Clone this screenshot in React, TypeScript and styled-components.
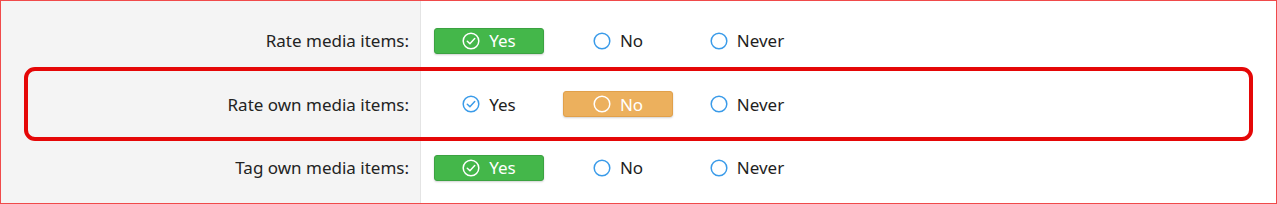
import React from "react";
import styled, { createGlobalStyle } from "styled-components";

const Global = createGlobalStyle`
  html, body { margin: 0; padding: 0; background: #fff; }
  body { font-family: "Noto Sans", "Open Sans", sans-serif; }
`;

const Frame = styled.div`
  position: relative;
  width: 1277px;
  height: 204px;
  box-sizing: border-box;
  border: 1px solid #f04a4a;
  display: grid;
  grid-template-columns: 420px 1fr;
  overflow: hidden;
`;

const LabelCol = styled.div`
  box-sizing: border-box;
  background: #f4f4f4;
  border-right: 1px solid #e4e4e4;
  padding: 8px 11px 0 0;
  display: flex;
  flex-direction: column;
`;

const OptionCol = styled.div`
  padding: 8px 0 0 13px;
  display: flex;
  flex-direction: column;
`;

const Label = styled.div`
  height: 63.5px;
  display: flex;
  align-items: center;
  justify-content: flex-end;
  font-size: 17px;
  color: #232323;
`;

const Row = styled.div`
  height: 63.5px;
  display: flex;
  align-items: center;
  gap: 19px;
`;

type Tone = "green" | "orange" | "none";

const toneBg: Record<Tone, string> = {
  green: "#44b74a",
  orange: "#ecb05d",
  none: "transparent",
};
const toneBorder: Record<Tone, string> = {
  green: "#3ba241",
  orange: "#e1a04a",
  none: "transparent",
};

const Choice = styled.div<{ $tone: Tone }>`
  width: 110px;
  height: 26px;
  box-sizing: border-box;
  border-radius: 3px;
  display: flex;
  align-items: center;
  justify-content: center;
  gap: 9px;
  font-size: 17px;
  background: ${(p) => toneBg[p.$tone]};
  border: 1px solid ${(p) => toneBorder[p.$tone]};
  color: ${(p) => (p.$tone === "none" ? "#1e1e1e" : "#fff")};
  box-shadow: ${(p) => (p.$tone === "none" ? "none" : "0 1px 2px rgba(0,0,0,0.18)")};
`;

const Highlight = styled.div`
  position: absolute;
  left: 23px;
  top: 66px;
  width: 1229px;
  height: 74px;
  box-sizing: border-box;
  border: 4.5px solid #e50707;
  border-radius: 11px;
  pointer-events: none;
`;

type Icon = "check" | "circle";

const Glyph: React.FC<{ icon: Icon; color: string }> = ({ icon, color }) => (
  <svg width="18" height="18" viewBox="0 0 18 18" fill="none">
    <circle cx="9" cy="9" r="7.8" stroke={color} strokeWidth="1.5" />
    {icon === "check" && (
      <path d="M5.3 9.2 L7.9 11.7 L12.7 6.6" stroke={color} strokeWidth="1.5" strokeLinecap="round" strokeLinejoin="round" />
    )}
  </svg>
);

type Opt = { text: string; tone: Tone; icon: Icon };

const rows: { label: string; opts: Opt[] }[] = [
  {
    label: "Rate media items:",
    opts: [
      { text: "Yes", tone: "green", icon: "check" },
      { text: "No", tone: "none", icon: "circle" },
      { text: "Never", tone: "none", icon: "circle" },
    ],
  },
  {
    label: "Rate own media items:",
    opts: [
      { text: "Yes", tone: "none", icon: "check" },
      { text: "No", tone: "orange", icon: "circle" },
      { text: "Never", tone: "none", icon: "circle" },
    ],
  },
  {
    label: "Tag own media items:",
    opts: [
      { text: "Yes", tone: "green", icon: "check" },
      { text: "No", tone: "none", icon: "circle" },
      { text: "Never", tone: "none", icon: "circle" },
    ],
  },
];

export default function App() {
  return (
    <>
      <Global />
      <Frame>
        <LabelCol>
          {rows.map((r) => (
            <Label key={r.label}>{r.label}</Label>
          ))}
        </LabelCol>
        <OptionCol>
          {rows.map((r) => (
            <Row key={r.label}>
              {r.opts.map((o) => (
                <Choice key={o.text} $tone={o.tone}>
                  <Glyph icon={o.icon} color={o.tone === "none" ? "#3a9be9" : "#ffffff"} />
                  <span>{o.text}</span>
                </Choice>
              ))}
            </Row>
          ))}
        </OptionCol>
        <Highlight />
      </Frame>
    </>
  );
}
